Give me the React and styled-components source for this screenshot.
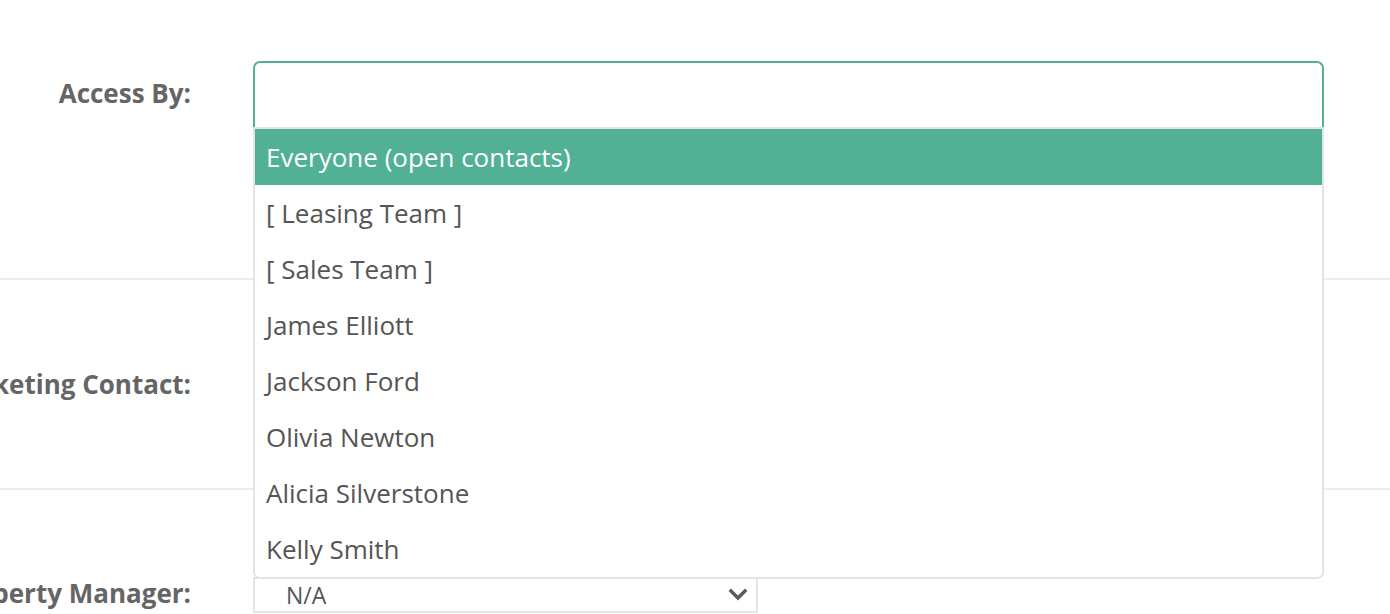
import React from "react";
import styled, { createGlobalStyle } from "styled-components";

const Global = createGlobalStyle`
  html, body { margin: 0; padding: 0; background: #fff; overflow: hidden; }
  body { font-family: "Open Sans", "Noto Sans", sans-serif; }
`;

const Form = styled.div`
  width: 1390px;
`;

const Row = styled.div`
  display: flex;
  align-items: ${(p) => p.$align || "center"};
  gap: 62px;
  box-sizing: border-box;
  height: ${(p) => p.$height}px;
  padding-top: ${(p) => p.$padTop || 0}px;
  border-bottom: ${(p) => (p.$last ? "none" : "2px solid #ececec")};
`;

const Label = styled.div`
  flex: 0 0 191px;
  width: 191px;
  min-width: 0;
  display: flex;
  justify-content: flex-end;
  height: ${(p) => p.$h}px;
  align-items: center;
  font-size: 26px;
  font-weight: 700;
  color: #656565;
  white-space: nowrap;
`;

const Combo = styled.div`
  position: relative;
  width: 1071px;
  z-index: 5;
`;

const ComboInput = styled.div`
  box-sizing: border-box;
  height: 66px;
  border: 2px solid #52b095;
  border-bottom: none;
  border-radius: 7px 7px 0 0;
  background: #fff;
`;

const Menu = styled.ul`
  position: absolute;
  top: 100%;
  left: 0;
  right: 0;
  margin: 0;
  padding: 0;
  list-style: none;
  background: #fff;
  border: 2px solid #e4e4e4;
  border-radius: 0 0 7px 7px;
  overflow: hidden;
`;

const Option = styled.li`
  height: 56px;
  display: flex;
  align-items: center;
  padding-left: 11px;
  font-size: 26px;
  color: ${(p) => (p.$active ? "#fff" : "#555")};
  background: ${(p) => (p.$active ? "#52b095" : "#fff")};
  white-space: nowrap;
`;

const Select = styled.div`
  box-sizing: border-box;
  width: 505px;
  height: ${(p) => p.$h || 36}px;
  border: 2px solid #e4e4e4;
  display: flex;
  align-items: center;
  justify-content: space-between;
  padding: 0 8px 0 31px;
  font-size: 23px;
  color: #555;
`;

const Chevron = () => (
  <svg width="20" height="14" viewBox="0 0 20 14" aria-hidden="true">
    <polyline
      points="3,3 10,10 17,3"
      fill="none"
      stroke="#5a5a5a"
      strokeWidth="3.4"
      strokeLinecap="square"
    />
  </svg>
);

const options = [
  "Everyone (open contacts)",
  "[ Leasing Team ]",
  "[ Sales Team ]",
  "James Elliott",
  "Jackson Ford",
  "Olivia Newton",
  "Alicia Silverstone",
  "Kelly Smith",
];

export default function App() {
  return (
    <>
      <Global />
      <Form>
        <Row $height={280} $align="flex-start" $padTop={61}>
          <Label $h={64}>Access By:</Label>
          <Combo>
            <ComboInput />
            <Menu>
              {options.map((o, i) => (
                <Option key={o} $active={i === 0}>
                  {o}
                </Option>
              ))}
            </Menu>
          </Combo>
        </Row>
        <Row $height={210}>
          <Label $h={36}>Marketing Contact:</Label>
          <Select>
            <span>N/A</span>
            <Chevron />
          </Select>
        </Row>
        <Row $height={124} $align="flex-start" $padTop={87} $last>
          <Label $h={32}>Property Manager:</Label>
          <Select $h={36}>
            <span>N/A</span>
            <Chevron />
          </Select>
        </Row>
      </Form>
    </>
  );
}
